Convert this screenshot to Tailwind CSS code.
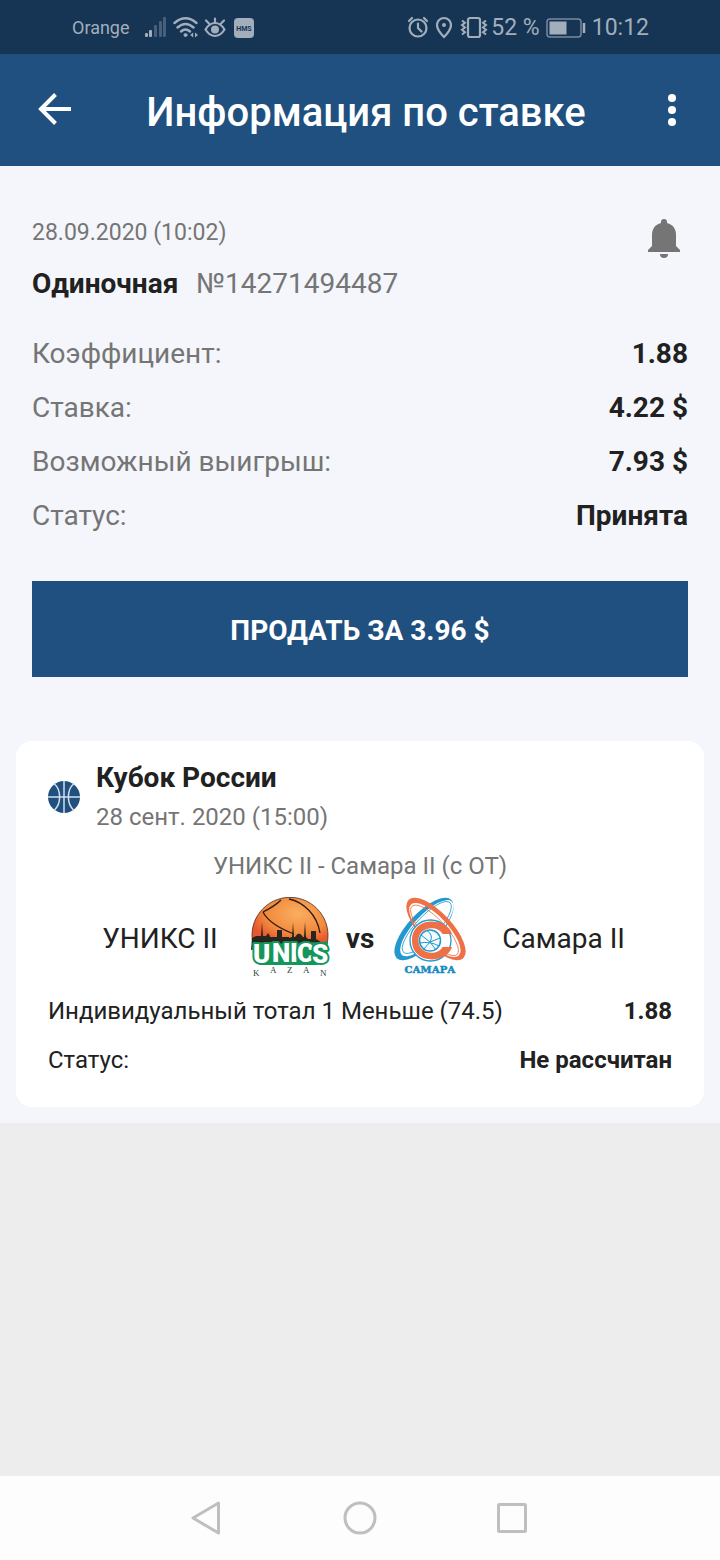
<!DOCTYPE html>
<html lang="ru">
<head>
<meta charset="utf-8">
<meta name="viewport" content="width=device-width, initial-scale=1">
<title>Информация по ставке</title>
<script src="https://cdn.jsdelivr.net/npm/@tailwindcss/browser@4"></script>
</head>
<body class="flex min-h-screen flex-col bg-[#ededed] font-['Roboto',sans-serif] text-[#212121]">

<div class="flex h-[54px] items-center justify-between bg-[#163554] pt-[2px] pr-[71px] pl-[72px] text-[#a2aebb]">
  <div class="flex items-center">
    <span class="mr-[15px] text-lg">Orange</span>
    <svg class="mr-[6px] h-6 w-[22px]" viewBox="0 0 22 24" fill="currentColor" aria-hidden="true">
      <rect x="0" y="17" width="3" height="4" rx="1"/><rect x="4" y="14" width="3" height="7" rx="1"/>
      <g opacity=".35"><rect x="9" y="9" width="3" height="12" rx="1"/><rect x="14" y="5" width="3" height="16" rx="1"/><rect x="18" y="1" width="3" height="20" rx="1"/></g>
    </svg>
    <svg class="mr-[6px] h-6 w-[25px]" viewBox="0 0 25 24" fill="none" stroke="currentColor" stroke-width="2.400" stroke-linecap="round" aria-hidden="true">
      <path d="M1.500 7Q12.500-2.500 23.500 7M4.500 11.500Q12.500 4.500 20.500 11.500M8 15.500Q12.500 11.500 17 15.500"/><circle cx="12.500" cy="19" r="1.500" fill="currentColor" stroke-width="1"/>
      <path d="M20.200 16.500v5l-3-2.500zM22 16.500v5l3-2.500z" fill="currentColor" stroke="none"/>
    </svg>
    <svg class="mr-2 h-6 w-[22px]" viewBox="0 0 22 24" fill="none" stroke="currentColor" stroke-width="2.200" stroke-linecap="round" aria-hidden="true">
      <path d="M1.500 13.500Q5.500 7 11 7T20.500 13.500Q16.500 20 11 20T1.500 13.500z"/><circle cx="11" cy="13.500" r="4" fill="currentColor" stroke="none"/><path d="M11 6V2.500M5 7.500L2 4.500M17 7.500L20 4.500"/>
    </svg>
    <svg class="h-5 w-5" viewBox="0 0 20 20" aria-hidden="true">
      <rect width="20" height="20" rx="4" fill="currentColor"/><text x="10" y="12.500" text-anchor="middle" font-size="7" font-weight="700" fill="#163554">HMS</text>
    </svg>
  </div>
  <div class="flex items-center">
    <svg class="mr-2 h-6 w-5" viewBox="0 0 20 24" fill="none" stroke="currentColor" stroke-width="2.200" stroke-linecap="round" aria-hidden="true">
      <circle cx="10" cy="12" r="8.500"/><path d="M10 7.500V12l3.500 3.500M1 5l3-3M19 5l-3-3"/>
    </svg>
    <svg class="mr-2 h-6 w-4" viewBox="0 0 16 24" fill="none" stroke="currentColor" stroke-width="2.200" aria-hidden="true">
      <path d="M8 21Q1 14 1 9A7 7 0 0 1 15 9Q15 14 8 21z"/><circle cx="8" cy="9" r="2" fill="currentColor" stroke="none"/>
    </svg>
    <svg class="mr-[3px] h-6 w-7" viewBox="0 0 28 24" fill="none" stroke="currentColor" stroke-width="2.200" aria-hidden="true">
      <rect x="8" y="2" width="12" height="19" rx="2"/><path stroke-width="2" d="M2 4.500l3 2.300-3 2.300 3 2.400-3 2.300 3 2.400-3 2.300M26 4.500l-3 2.300 3 2.300-3 2.400 3 2.300-3 2.400 3 2.300"/>
    </svg>
    <span class="mr-[6px] text-[23px]">52 %</span>
    <svg class="mr-[6px] h-5 w-10" viewBox="0 0 40 20" fill="none" stroke="currentColor" aria-hidden="true">
      <rect x="1" y="1" width="34" height="18" rx="3" stroke-width="1.500" opacity=".7"/><rect x="3.500" y="3.500" width="17" height="13" fill="currentColor" stroke="none"/><path d="M38 5v10" stroke-width="2.500"/>
    </svg>
    <span class="text-[23px]">10:12</span>
  </div>
</div>

<header class="flex h-28 items-center justify-between bg-[#20507f] px-8 text-white">
  <button type="button" aria-label="Назад" class="flex h-12 w-11 items-center">
    <svg class="h-12 w-11" viewBox="0 0 44 48" fill="none" stroke="currentColor" stroke-width="4" aria-hidden="true"><path d="M39 23H9M23.500 8.500L9 23l14.500 14.500"/></svg>
  </button>
  <h1 class="pt-[6px] text-[40px] leading-12 font-medium">Информация по ставке</h1>
  <button type="button" aria-label="Меню" class="flex h-12 w-8 items-center justify-center">
    <svg class="h-12 w-8" viewBox="0 0 32 48" fill="currentColor" aria-hidden="true"><circle cx="16" cy="12" r="4"/><circle cx="16" cy="24" r="4"/><circle cx="16" cy="36" r="4"/></svg>
  </button>
</header>

<main class="bg-[#f4f6fb] pb-4">
  <section class="px-8 pt-[50px]">
    <div class="flex items-start justify-between">
      <div>
        <p class="text-[23px] leading-[34px] text-[#757575]">28.09.2020 (10:02)</p>
        <p class="mt-[14px] text-[28px] leading-10"><span class="mr-[18px] font-bold">Одиночная</span><span class="text-[#757575]">№14271494487</span></p>
      </div>
      <button type="button" aria-label="Уведомления" class="mr-2 text-[#757575]">
        <svg class="h-11 w-8" viewBox="0 0 32 44" fill="currentColor" aria-hidden="true"><path d="M13 7V6a3 3 0 0 1 6 0v1C25 8.500 28 13 28 19v11l4 4v2H0v-2l4-4V19C4 13 7 8.500 13 7zM12 38h8a4 4 0 0 1-8 0z"/></svg>
      </button>
    </div>
    <dl class="mt-[23px] text-[28px] leading-[54px]">
      <div class="flex justify-between"><dt class="text-[#757575]">Коэффициент:</dt><dd class="font-bold">1.88</dd></div>
      <div class="flex justify-between"><dt class="text-[#757575]">Ставка:</dt><dd class="font-bold">4.22 $</dd></div>
      <div class="flex justify-between"><dt class="text-[#757575]">Возможный выигрыш:</dt><dd class="font-bold">7.93 $</dd></div>
      <div class="flex justify-between"><dt class="text-[#757575]">Статус:</dt><dd class="font-bold">Принята</dd></div>
    </dl>
    <button type="button" class="mt-[38px] h-24 w-full bg-[#20507f] pt-1 text-[28px] font-bold text-white">ПРОДАТЬ ЗА 3.96 $</button>
  </section>

  <article class="mx-4 mt-16 rounded-2xl bg-white px-8 pt-[17px] pb-[22px]">
    <div class="flex items-center gap-4">
      <svg class="h-8 w-8" viewBox="0 0 32 32" aria-hidden="true"><circle cx="16" cy="16" r="16" fill="#20507f"/><g fill="none" stroke="#d5e0ec" stroke-width="1.500"><path d="M16 0v32M0 16h32M6 2.500C13.500 9 13.500 23 6 29.500M26 2.500C18.500 9 18.500 23 26 29.500"/></g></svg>
      <div>
        <h2 class="text-[28px] leading-10 font-bold">Кубок России</h2>
        <p class="text-2xl leading-[38px] text-[#757575]">28 сент. 2020 (15:00)</p>
      </div>
    </div>
    <p class="mt-[14px] text-center text-2xl leading-8 text-[#757575]">УНИКС II - Самара II (с ОТ)</p>
    <div class="mt-[15px] grid grid-cols-[1fr_auto_1fr] items-center text-[28px]">
      <span class="pt-1 pr-8 text-right">УНИКС II</span>
      <div class="flex items-center gap-4">
        <svg class="h-20 w-20" viewBox="0 0 80 80" aria-hidden="true">
          <defs><radialGradient id="ball" cx=".6" cy=".35" r=".65"><stop offset="0" stop-color="#fbae60"/><stop offset=".65" stop-color="#f18a3c"/><stop offset="1" stop-color="#e9552f"/></radialGradient></defs>
          <path d="M3 47A38 38 0 1 1 77 47z" fill="url(#ball)" stroke="#4a2a1e" stroke-width=".8"/>
          <path d="M13 15C18 25 31 32 44 37M39 2C53 5 67 17 70 36M13 15C19 12 25 9 31 3" fill="none" stroke="#2c1914" stroke-width="1.300"/>
          <path d="M2 41l4-2 5 0 1-14 1 14h3l2-3 2 3v1h7v-7h5v7h7v1l3-1 1-15 1 15h1q4-7 8 0h1l1-15 1 15 2 2h3v-8h5v8l5 3-1 8q-39-7-69 0z" fill="#28251f"/>
          <path d="M3 45q8 1 18 0 18 4 38 0 12 1 19-1l-1 20-10 4H10L3 62z" fill="#13965a"/>
          <text x="3 22 40 47 62" y="66 65 65 65 66" font-family="Roboto, sans-serif" font-weight="900" font-size="26" fill="white" stroke="#13965a" stroke-width="4" stroke-linejoin="round" paint-order="stroke">UNICS</text>
          <text x="3 20 37 53 70" y="79 76 76 76 79" font-family="Liberation Serif, serif" font-size="9" fill="#33433b">KAZAN</text>
        </svg>
        <span class="pt-1 font-bold">vs</span>
        <svg class="h-20 w-20" viewBox="0 0 80 80" aria-hidden="true">
          <g transform="rotate(43 34 32)">
            <path fill-rule="evenodd" fill="#2398cf" d="M18 32a16 40 0 1 1 32 0a16 40 0 1 1-32 0zM22.500 29.500a13 36.500 0 1 0 26 0a13 36.500 0 1 0-26 0z"/>
            <ellipse cx="35" cy="29" rx="11" ry="34" fill="none" stroke="#2398cf" stroke-width=".8"/>
          </g>
          <g transform="rotate(-43 46 32)">
            <path fill-rule="evenodd" fill="#ed7047" d="M30 32a16 40 0 1 1 32 0a16 40 0 1 1-32 0zM31.500 32a13 35 0 1 0 26 0a13 35 0 1 0-26 0z"/>
            <ellipse cx="44" cy="32" rx="11" ry="33" fill="none" stroke="#ed7047" stroke-width=".8"/>
          </g>
          <circle cx="40.500" cy="43.500" r="20.500" fill="white" stroke="#2398cf" stroke-width="1.300"/>
          <path d="M62 37h-9.500C48 28 28.500 29 28.500 43.500S48 59 52.500 50H62C57 67 22 68 22 43.500S57 20 62 37z" fill="#ed7047"/>
          <circle cx="40" cy="43.500" r="10.500" fill="#f3fbfe" stroke="#2398cf" stroke-width="1.500"/>
          <path d="M31 38l9 7 10-4M40 45l-7 8M40 45l6 8M37 33.500q7 5 3 11.500M30 46q10-2 19 3" fill="none" stroke="#2398cf"/>
          <text x="40" y="76" text-anchor="middle" font-family="DejaVu Serif, serif" font-weight="700" font-size="10" fill="#168bc2" stroke="#168bc2" stroke-width=".5">САМАРА</text>
        </svg>
      </div>
      <span class="pt-1 pl-8">Самара II</span>
    </div>
    <dl class="mt-[10px] text-2xl leading-[49px]">
      <div class="flex justify-between"><dt>Индивидуальный тотал 1 Меньше (74.5)</dt><dd class="font-bold">1.88</dd></div>
      <div class="flex justify-between"><dt>Статус:</dt><dd class="font-bold">Не рассчитан</dd></div>
    </dl>
  </article>
</main>

<nav aria-label="Системная навигация" class="mt-auto flex h-[84px] items-center justify-center gap-28 bg-[#fdfdfd] text-[#bfbfbf]">
  <button type="button" aria-label="Назад"><svg class="h-10 w-10" viewBox="0 0 40 40" fill="none" stroke="currentColor" stroke-width="3" stroke-linejoin="round" aria-hidden="true"><path d="M30.500 5v30L5 20z"/></svg></button>
  <button type="button" aria-label="Домой"><svg class="h-10 w-10" viewBox="0 0 40 40" fill="none" stroke="currentColor" stroke-width="3" aria-hidden="true"><circle cx="20" cy="20" r="15"/></svg></button>
  <button type="button" aria-label="Недавние"><svg class="h-10 w-10" viewBox="0 0 40 40" fill="none" stroke="currentColor" stroke-width="3" aria-hidden="true"><rect x="6.500" y="6.500" width="27" height="27" rx="1"/></svg></button>
</nav>
</body>
</html>
